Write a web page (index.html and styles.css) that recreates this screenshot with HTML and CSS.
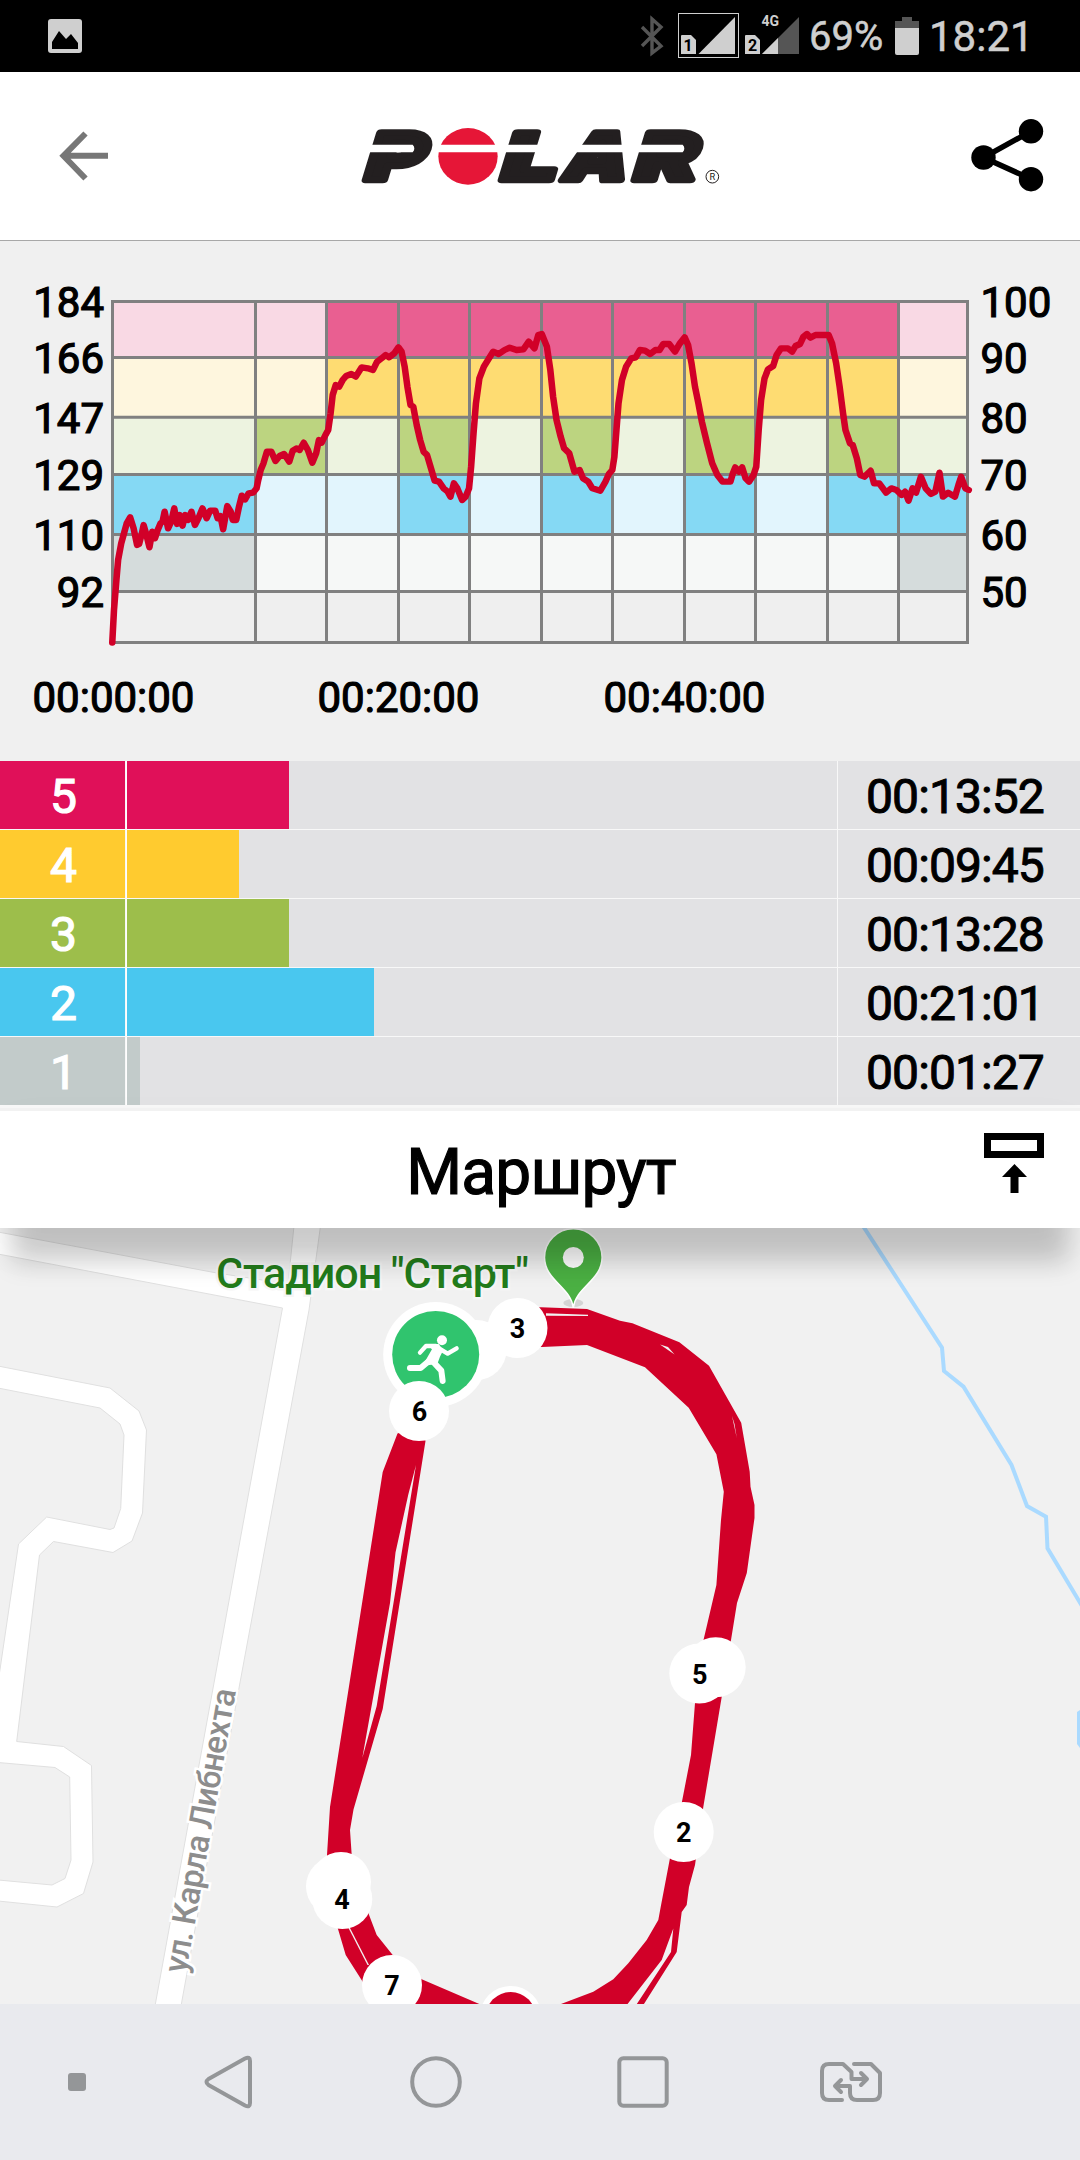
FILE: index.html
```html
<!DOCTYPE html>
<html lang="ru">
<head>
    <meta charset="UTF-8">
    <meta name="viewport" content="width=device-width, initial-scale=1.0">
    <title>Polar - Маршрут</title>
    <link rel="stylesheet" href="styles.css">
</head>
<body>
    <div class="status-bar">
        <svg class="status-image" width="34" height="34" viewBox="0 0 34 34">
            <rect width="34" height="34" rx="3" fill="#cfcfcf"/>
            <path d="M4 30V23L11 12L18 20L23 15L30 24V30Z" fill="#000"/>
        </svg>
        <svg class="status-signal" width="166" height="72" viewBox="636 0 166 72">
            <path d="M642 27L661 46L652 53V19L661 27L642 46" fill="none" stroke="#555" stroke-width="3.4"/>
            <rect x="678.5" y="13.5" width="60" height="44" fill="none" stroke="#cfcfcf"/>
            <path d="M681 36Q681 35 682 35H691L696 40V54H681Z" fill="#cfcfcf"/>
            <path d="M698.5 54L735 17V54Z" fill="#cfcfcf"/>
            <path d="M745 36Q745 35 746 35H755L760 40V54H745Z" fill="#cfcfcf"/>
            <path d="M762 54L799 17V54Z" fill="#555"/>
            <path d="M762 54L778 38V54Z" fill="#cfcfcf"/>
            <text class="sim" x="688" y="51">1</text>
            <text class="sim" x="752.5" y="51">2</text>
            <text class="net" x="761.5" y="26">4G</text>
        </svg>
        <span class="battery-text">69%</span>
        <svg class="status-battery" width="24" height="38" viewBox="0 0 24 38">
            <path d="M7 0H17V4H24V12H0V4H7Z" fill="#555"/>
            <path d="M0 11H24V36Q24 38 22 38H2Q0 38 0 36Z" fill="#cfcfcf"/>
        </svg>
        <span class="clock">18:21</span>
    </div>

    <header>
        <svg width="64" height="64" viewBox="52 124 64 64">
            <path d="M108 155.8H64M85.500 133.500L63.500 155.8L85.500 178.500" fill="none" stroke="#777" stroke-width="6"/>
        </svg>
        <svg width="400" height="90" viewBox="0 0 1200 270">
            <g class="logo-letters" transform="translate(0 207) skewX(-17)">
                <text x="66" y="0" textLength="174" lengthAdjust="spacingAndGlyphs">P</text>
                <text x="474" y="0" textLength="164" lengthAdjust="spacingAndGlyphs">L</text>
                <text x="660" y="0" textLength="188" lengthAdjust="spacingAndGlyphs">A</text>
                <text x="872" y="0" textLength="184" lengthAdjust="spacingAndGlyphs">R</text>
            </g>
            <ellipse cx="384" cy="136" rx="89" ry="85" fill="#e61637"/>
            <path d="M60 101H218Q228 112 218 124H60ZM285 101H860V124H285ZM885 101H1028Q1038 112 1028 124H865Z" fill="#fff"/>
            <circle cx="1117" cy="197" r="19" fill="none" stroke="#231f20" stroke-width="3"/>
            <text class="reg" x="1117" y="207">R</text>
        </svg>
        <svg class="share" width="80" height="80" viewBox="968 116 80 80">
            <path d="M1031 131.3L983.500 157.500L1031 179" fill="none" stroke="#000" stroke-width="5.500"/>
            <circle cx="1031" cy="131.3" r="12.2"/>
            <circle cx="983.5" cy="157.5" r="12.2"/>
            <circle cx="1031" cy="179.2" r="12.2"/>
        </svg>
    </header>

    <section class="chart">
        <svg width="1080" height="520" viewBox="0 241 1080 520">
            <!-- pale zone bands -->
            <rect x="112" y="301" width="856" height="57" fill="#f9d9e4"/>
            <rect x="112" y="358" width="856" height="59" fill="#fef6de"/>
            <rect x="112" y="417" width="856" height="57" fill="#edf3e0"/>
            <rect x="112" y="474" width="856" height="60" fill="#e2f5fd"/>
            <rect x="112" y="534" width="856" height="57" fill="#f6f8f7"/>
            <rect x="112" y="591" width="856" height="51" fill="#efefef"/>

            <!-- target zones of each phase -->
            <path d="M326 301H898V358H326Z" fill="#e95f91"/>
            <path d="M326 358H898V417H326Z" fill="#fedc72"/>
            <path d="M255 417H326V474H255ZM398 417H469V474H398ZM541 417H612V474H541ZM684 417H755V474H684ZM827 417H898V474H827Z" fill="#bcd480"/>
            <path d="M112 474H255V534H112ZM398 474H469V534H398ZM541 474H612V534H541ZM684 474H755V534H684ZM827 474H968V534H827Z" fill="#85d9f4"/>
            <path d="M112 534H255V591H112ZM898 534H968V591H898Z" fill="#d5dcdc"/>

            <path class="grid" d="M111 301.500H969M111 357.500H969M111 417.200H969M111 474.500H969M111 534.500H969M111 591.500H969M111 642.500H969"/>
            <path class="grid" d="M112.500 301V643M255.500 301V643M326.500 301V643M398.500 301V643M469.500 301V643M541.500 301V643M612.500 301V643M684.500 301V643M755.500 301V643M827.500 301V643M898.500 301V643M967.500 301V643"/>

            <!-- heart rate -->
            <svg x="0" y="270" width="1080" height="460" viewBox="0 0 3136 1380" preserveAspectRatio="none">
                <polyline class="pulse" points="326,1118 331,1020 338,930 343,870 352,820 360,790 368,760 378,742 388,775 398,825 404,822 412,790 417,765 424,790 434,832 442,785 450,805 458,780 466,760 472,755 478,725 488,775 497,755 506,715 514,762 522,735 530,767 538,735 546,750 556,725 566,765 576,745 588,715 600,745 610,722 625,722 632,745 640,738 648,778 660,708 670,725 676,750 686,750 694,710 702,677 712,688 722,670 735,668 745,655 750,630 757,600 765,580 775,545 788,545 800,573 812,558 825,552 840,575 850,542 862,535 870,540 882,518 894,540 907,578 918,550 926,510 934,518 945,495 953,480 960,430 966,375 975,345 985,350 995,330 1005,318 1020,312 1033,320 1050,292 1068,295 1083,300 1095,275 1108,265 1120,255 1130,262 1145,250 1157,232 1166,245 1175,290 1183,350 1192,405 1200,410 1210,465 1220,510 1230,545 1240,555 1250,590 1262,632 1275,635 1288,655 1300,665 1308,680 1318,640 1328,655 1342,690 1352,680 1362,655 1368,590 1375,490 1382,400 1392,325 1405,290 1418,268 1432,245 1448,252 1465,240 1480,233 1500,240 1520,238 1535,215 1552,235 1563,195 1573,192 1588,230 1598,300 1606,380 1616,450 1628,500 1638,535 1653,550 1668,605 1683,600 1693,625 1708,635 1720,655 1743,662 1758,635 1768,612 1778,600 1784,560 1790,480 1796,400 1806,330 1818,290 1833,265 1846,262 1858,240 1873,242 1888,252 1903,240 1915,240 1926,222 1943,222 1960,245 1973,222 1988,202 1998,225 2008,280 2018,350 2028,400 2038,455 2053,520 2068,580 2083,615 2098,635 2121,635 2128,610 2135,592 2145,605 2155,592 2165,625 2175,635 2188,615 2196,590 2203,480 2210,390 2220,325 2230,298 2245,288 2255,255 2268,235 2288,235 2300,245 2310,228 2323,222 2333,200 2343,192 2353,203 2368,195 2406,195 2416,220 2428,280 2438,350 2448,430 2455,480 2468,520 2476,525 2488,565 2498,615 2510,620 2528,602 2538,640 2553,640 2573,668 2588,655 2603,660 2618,675 2628,665 2638,692 2650,655 2660,668 2674,620 2688,655 2703,672 2716,665 2728,608 2738,680 2753,668 2773,680 2783,645 2791,620 2803,655 2813,660"/>
            </svg>

            <g class="axis axis-left">
                <text x="104" y="316.5">184</text>
                <text x="104" y="372.5">166</text>
                <text x="104" y="432.5">147</text>
                <text x="104" y="489.5">129</text>
                <text x="104" y="549.5">110</text>
                <text x="104" y="606.5">92</text>
            </g>
            <g class="axis">
                <text x="980.5" y="316.5">100</text>
                <text x="980.5" y="372.5">90</text>
                <text x="980.5" y="432.5">80</text>
                <text x="980.5" y="489.5">70</text>
                <text x="980.5" y="549.5">60</text>
                <text x="980.5" y="606.5">50</text>
            </g>
            <g class="axis axis-time">
                <text x="113.5" y="712">00:00:00</text>
                <text x="398.5" y="712">00:20:00</text>
                <text x="684.5" y="712">00:40:00</text>
            </g>
        </svg>
    </section>

    <section class="zones">
        <div class="zone zone5">
            <div class="zone-number">5</div>
            <div class="zone-track"><div class="zone-bar" style="width: 163px"></div></div>
            <div class="zone-time">00:13:52</div>
        </div>
        <div class="zone zone4">
            <div class="zone-number">4</div>
            <div class="zone-track"><div class="zone-bar" style="width: 113px"></div></div>
            <div class="zone-time">00:09:45</div>
        </div>
        <div class="zone zone3">
            <div class="zone-number">3</div>
            <div class="zone-track"><div class="zone-bar" style="width: 163px"></div></div>
            <div class="zone-time">00:13:28</div>
        </div>
        <div class="zone zone2">
            <div class="zone-number">2</div>
            <div class="zone-track"><div class="zone-bar" style="width: 248px"></div></div>
            <div class="zone-time">00:21:01</div>
        </div>
        <div class="zone zone1">
            <div class="zone-number">1</div>
            <div class="zone-track"><div class="zone-bar" style="width: 14px"></div></div>
            <div class="zone-time">00:01:27</div>
        </div>
    </section>

    <div class="route-title">
        <h1>Маршрут</h1>
        <svg width="60" height="60" viewBox="0 0 60 60">
            <rect x="3.5" y="3.5" width="53" height="18" fill="none" stroke="#000" stroke-width="7"/>
            <path d="M30.500 31L43 44H34.500V60H26.500V44H18Z"/>
        </svg>
    </div>

    <div class="map">
        <svg width="1080" height="776" viewBox="0 1228 1080 776">
            <!-- roads -->
            <g class="road">
                <path d="M-2 1232L217 1273L288 1284L294 1226H320.500L309 1310L239 1688L181 2006H155L282.500 1308L180 1288.500L-2 1254Z"/>
                <path d="M-2 1366L110 1388L139 1411L146.500 1430L142.500 1513L132 1541L113 1552.500L53.500 1541.500L39.500 1555L16.700 1741.500L63.500 1746.500L91.500 1765.500L93 1862L83.500 1893.500L57 1907L-2 1901V1880L52 1885L65 1878.500L71 1860L69.700 1777L55 1767.500L-2 1762.500V1683L18.500 1544L46.700 1517L110 1529.500L114 1528L120.700 1508.500L124 1435L120 1424L100 1408L-2 1388Z"/>
            </g>

            <!-- river -->
            <path class="river" d="M863 1226L942 1347.700L944 1371L963.500 1386.700L1011.500 1465L1027 1506L1046 1516.700L1047.500 1548.300L1082 1606"/>
            <path d="M1077 1712L1080 1710V1748L1077 1744Z" fill="#aadaff"/>

            <text class="street" transform="translate(186 1974) rotate(-80)" x="0" y="0" textLength="288">ул. Карла Либнехта</text>

            <!-- laps -->
            <g class="track">
                <path d="M520 1308L541 1307.300L587 1309L620 1320.700L632.400 1323.300L679.400 1342.300L709 1365.700L741.200 1422.700L749.700 1471.700L750.500 1486.700L754.500 1505V1518L746.800 1573L737 1603L731 1640L721.700 1697L703.300 1807L695 1865L689 1887L686.700 1905L681.700 1912L676.700 1952L642.700 2006H555L561 2004L593.300 1991.700L613.300 1979.300L628.300 1963.300L646.700 1940L658.300 1920L660.700 1907L670 1858L681.700 1803L691 1755L695 1703L703.500 1640L716.400 1585L721 1520L723.800 1491.700L716.400 1454.300L688.700 1407.700L645 1367.300L587 1345L542 1347L520 1347Z"/>
                <path d="M397.500 1433.500L382.700 1472L330 1807L327 1855L337.700 1928L345.700 1955L363.500 1983L400 2006H484L421.700 1979.300L392.700 1955L376.700 1935L368.300 1913L351.700 1855L350 1830L353.500 1809.500L382.700 1709L425.500 1441L420 1425Z"/>
            </g>
            <g class="gap">
                <path d="M673.300 1928.500L671 1952L635.500 2006H626L661.700 1960Z"/>
                <path d="M416 1465L376.700 1706L362.300 1758L390 1603L395.500 1552.500L408.300 1494.500Z"/>
                <path d="M546 1313.200L588 1314.700V1316L546 1315.700Z"/>
                <path d="M660 1344.500L674.600 1354.500L668 1347Z"/>
                <path d="M732 1416L736.800 1438L734.500 1424Z"/>
                <path d="M348.500 1928L350 1928L369 1965H367.500Z"/>
            </g>

            <!-- place pin -->
            <ellipse cx="573.3" cy="1303" rx="10" ry="4" fill="#d4d4d4"/>
            <path d="M573.300 1308C571 1287 545 1281 544.500 1257.500A28.800 28.800 0 0 1 602.100 1257.500C601.600 1281 575.600 1287 573.300 1308Z" fill="#4bb043" stroke="#fff" stroke-width="1.500"/>
            <circle cx="573.3" cy="1257.500" r="10.500" fill="#fff"/>
            <text class="place" x="216" y="1288" textLength="313">Стадион "Старт"</text>

            <!-- kilometre marks -->
            <g fill="#fff">
                <circle cx="476.500" cy="1350" r="30"/>
                <circle cx="517.500" cy="1328" r="30"/>
                <circle cx="435.700" cy="1354.500" r="52.500"/>
                <circle cx="715.700" cy="1667.300" r="30"/>
                <circle cx="699.300" cy="1673.500" r="30"/>
                <circle cx="683.700" cy="1832" r="30"/>
                <circle cx="336" cy="1886.500" r="30"/>
                <circle cx="341" cy="1882" r="30"/>
                <circle cx="342.300" cy="1899" r="30"/>
                <circle cx="392" cy="1985" r="30"/>
                <circle cx="510.700" cy="2017" r="31"/>
            </g>
            <circle cx="510.700" cy="2017" r="25" fill="#d10028"/>
            <circle cx="435.700" cy="1354.500" r="43.500" fill="#30c46e"/>
            <g class="runner" transform="translate(180 1210) scale(.3333)">
                <circle cx="786" cy="391" r="15"/>
                <path d="M740 402H776L790 420L780 440L772 462L742 466L732 460L756 418Z"/>
                <path class="limb" d="M720 428L738 408H768M782 418L803 431L830 415"/>
                <path class="leg" d="M690 474H722L746 454M760 456L784 482L788 513"/>
            </g>
            <circle cx="419" cy="1411" r="30" fill="#fff"/>
            <g class="km">
                <text x="517.500" y="1338">3</text>
                <text x="419.500" y="1420.500">6</text>
                <text x="699.700" y="1683.500">5</text>
                <text x="683.700" y="1842">2</text>
                <text x="342" y="1909">4</text>
                <text x="392" y="1995">7</text>
            </g>
        </svg>
    </div>

    <nav>
        <div class="nav-dot"></div>
        <svg width="64" height="64" viewBox="197 2050 64 64">
            <path d="M208.500 2079L245 2058.500Q250 2056 250 2061V2103Q250 2108 245 2105.500L208.500 2085Q204.500 2082 208.500 2079Z"/>
        </svg>
        <svg width="64" height="64" viewBox="404 2050 64 64">
            <circle cx="436" cy="2082" r="23.8"/>
        </svg>
        <svg width="64" height="64" viewBox="611 2050 64 64">
            <rect x="619.300" y="2058.200" width="47.400" height="47.600" rx="4"/>
        </svg>
        <svg width="64" height="64" viewBox="818 2050 64 64">
            <path d="M842 2100H829Q822 2100 822 2093V2071Q822 2064 829 2064H843L851.500 2072V2079H866M861 2073L867 2079L861 2085"/>
            <path d="M854 2064H871L880 2073V2093Q880 2100 873 2100H857Q850 2100 850 2093V2086H836M841 2080L835 2086L841 2092"/>
        </svg>
    </nav>
</body>
</html>
```

FILE: styles.css
```css
* {
    box-sizing: border-box;
}

body {
    font-family: Roboto, "Liberation Sans", sans-serif;
    margin: 0;
    padding: 0;
    width: 1080px;
    background-color: #f0f0f0;
    color: #000;
}

svg {
    display: block;
}

/* status bar */
.status-bar {
    display: flex;
    align-items: center;
    height: 72px;
    padding-left: 48px;
    background-color: #000;
    color: #cfcfcf;
}

.status-signal {
    margin-left: 554px;
}

.status-battery {
    width: 24px;
    margin-left: auto;
}

.battery-text {
    width: 76px;
    margin-left: 7px;
    font-size: 40px;
    line-height: 72px;
    padding-top: 2px;
    -webkit-text-stroke: 0.5px #cfcfcf;
}

.clock {
    width: 151px;
    margin-left: 10px;
    font-size: 42px;
    line-height: 72px;
    padding-top: 2px;
    -webkit-text-stroke: 0.5px #cfcfcf;
}

.sim {
    font-size: 16px;
    font-weight: bold;
    text-anchor: middle;
}

.net {
    font-size: 14px;
    font-weight: bold;
    fill: #cfcfcf;
}

/* header */
header {
    display: grid;
    grid-template-columns: 288px 400px 1fr;
    align-items: center;
    height: 169px;
    padding: 0 32px 0 52px;
    background-color: #fff;
    border-bottom: 1px solid #a8a8a8;
}

.share {
    justify-self: end;
}

.logo-letters {
    font-family: Inter, Roboto, sans-serif;
    font-size: 196px;
    font-weight: 900;
    fill: #231f20;
    stroke: #231f20;
    stroke-width: 20px;
    stroke-linejoin: round;
}

.reg {
    font-size: 28px;
    text-anchor: middle;
    fill: #231f20;
}

/* heart rate chart */
.chart {
    height: 520px;
}

.grid {
    fill: none;
    stroke: #808080;
    stroke-width: 3px;
}

.pulse {
    fill: none;
    stroke: #d10028;
    stroke-width: 19px;
    stroke-linejoin: round;
    stroke-linecap: round;
}

.axis {
    font-size: 42px;
    stroke: #000;
    stroke-width: 1.2px;
}

.axis-left {
    text-anchor: end;
}

.axis-time {
    text-anchor: middle;
}

/* time in zones */
.zones {
    display: flex;
    flex-direction: column;
    gap: 1px;
    height: 347px;
    background-color: #f8f8f8;
}

.zone {
    display: flex;
    gap: 1px;
    height: 68px;
    font-size: 48px;
    line-height: 71px;
}

.zone-number {
    width: 125px;
    padding-left: 2px;
    text-align: center;
    color: #fff;
    -webkit-text-stroke: 1.2px #fff;
}

.zone-track {
    width: 711px;
    background-color: #e2e2e4;
}

.zone-bar {
    height: 68px;
    border-left: 1px solid #fff;
}

.zone-time {
    flex: 1;
    padding-left: 28px;
    letter-spacing: -0.9px;
    background-color: #e2e2e4;
    -webkit-text-stroke: 1px #000;
}

.zone5 .zone-number, .zone5 .zone-bar {
    background-color: #e01059;
}

.zone4 .zone-number, .zone4 .zone-bar {
    background-color: #ffcb2f;
}

.zone3 .zone-number, .zone3 .zone-bar {
    background-color: #9dbe4b;
}

.zone2 .zone-number, .zone2 .zone-bar {
    background-color: #49c7ef;
}

.zone1 .zone-number, .zone1 .zone-bar {
    background-color: #c2cbca;
}

/* route */
.route-title {
    position: relative;
    z-index: 1;
    display: grid;
    grid-template-columns: 1fr 60px;
    height: 120px;
    padding: 22px 36px 0 96px;
    background-color: #fff;
    border-top: 3px solid #f2f2f2;
    box-shadow: 0 46px 24px -12px rgba(0, 0, 0, 0.18), 0 20px 50px rgba(0, 0, 0, 0.04);
}

.route-title h1 {
    margin: 0;
    padding-left: 2px;
    text-align: center;
    font-size: 64px;
    font-weight: 400;
    line-height: 79px;
    letter-spacing: -0.8px;
    -webkit-text-stroke: 1.2px #000;
}

.map {
    height: 776px;
    overflow: hidden;
    background-color: #f1f1f1;
}

.road {
    fill: #fff;
    stroke: #e0e0e0;
    stroke-width: 1px;
}

.river {
    fill: none;
    stroke: #aadaff;
    stroke-width: 4px;
}

.track {
    fill: #d10028;
}

.gap {
    fill: #f1f1f1;
}

.street {
    font-size: 33px;
    font-weight: 500;
    fill: #8d8d8d;
    stroke: #fff;
    stroke-width: 5px;
    paint-order: stroke;
}

.place {
    font-size: 43px;
    font-weight: 500;
    fill: #237c1b;
    stroke: #f6f6f6;
    stroke-width: 5px;
    paint-order: stroke;
}

.runner {
    fill: #fff;
}

.limb, .leg {
    fill: none;
    stroke: #fff;
    stroke-width: 13px;
    stroke-linejoin: round;
    stroke-linecap: round;
}

.leg {
    stroke-width: 18px;
}

.km {
    font-size: 27px;
    font-weight: bold;
    text-anchor: middle;
}

/* system buttons */
nav {
    display: flex;
    align-items: center;
    gap: 143px;
    height: 156px;
    padding-left: 68px;
    background-color: #e9eaee;
}

nav svg {
    fill: none;
    stroke: #949698;
    stroke-width: 4px;
    stroke-linecap: round;
    stroke-linejoin: round;
}

.nav-dot {
    width: 18px;
    height: 18px;
    margin-right: -32px;
    border-radius: 3px;
    background-color: #949698;
}
```
